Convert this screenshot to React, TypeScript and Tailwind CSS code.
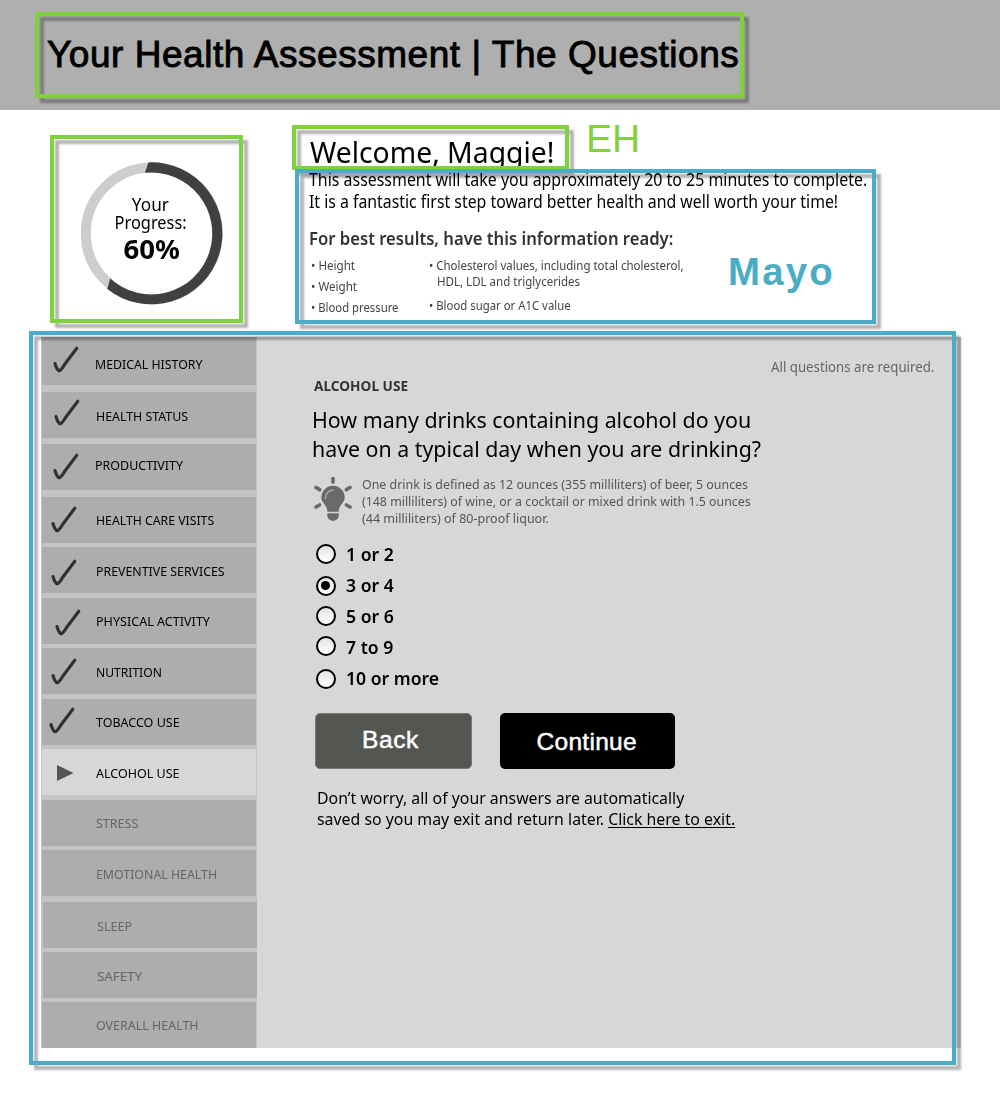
import type { ReactNode } from "react";

function Frame({ className }: { className: string }) {
  return (
    <div
      className={`pointer-events-none absolute border-4 drop-shadow-[5px_5px_1px_rgba(0,0,0,0.3)] ${className}`}
    />
  );
}

function T({ children, className = "", s = "" }: { children: ReactNode; className?: string; s?: string }) {
  return (
    <div className={className}>
      <span className={`inline-block whitespace-nowrap ${s.includes("origin-") ? "" : "origin-left"} ${s}`}>{children}</span>
    </div>
  );
}

function Check({ className }: { className: string }) {
  return (
    <svg viewBox="0 0 27 28" className={`absolute h-7 w-[27px] ${className}`}>
      <path
        d="M2 17.5 C2.8 20.5 4 23.6 6 24.8 C8.3 24.3 9.8 21 12.3 17.5 L23.8 2.2"
        fill="none"
        stroke="#303030"
        strokeWidth="3.1"
        strokeLinecap="round"
        strokeLinejoin="round"
      />
    </svg>
  );
}

type Item = { label: string; scale: string; box: string; check?: string; active?: boolean; pending?: boolean };

const items: Item[] = [
  { label: "MEDICAL HISTORY", scale: "scale-x-[0.926]", box: "h-12 pl-[52.5px] pt-[16.5px]", check: "left-[11px] top-[9px]" },
  { label: "HEALTH STATUS", scale: "scale-x-[0.930]", box: "mt-[7px] h-[46px] pl-[54px] pt-[13.5px]", check: "left-[12px] top-[7px]" },
  { label: "PRODUCTIVITY", scale: "scale-x-[0.938]", box: "mt-[6px] h-[46px] pl-[53px] pt-[11px]", check: "left-[11px] top-[9px]" },
  { label: "HEALTH CARE VISITS", scale: "scale-x-[0.922]", box: "mt-[7px] h-[46px] pl-[54px] pt-[13px]", check: "left-[9px] top-[9px]" },
  { label: "PREVENTIVE SERVICES", scale: "scale-x-[0.929]", box: "mt-[4px] h-[46px] pl-[54px] pt-[13.5px]", check: "left-[9px] top-[12px]" },
  { label: "PHYSICAL ACTIVITY", scale: "scale-x-[0.946]", box: "mt-[5px] h-[46px] pl-[54px] pt-[13px]", check: "left-[13px] top-[11px]" },
  { label: "NUTRITION", scale: "scale-x-[0.910]", box: "mt-[4px] h-[46px] pl-[54px] pt-[13.5px]", check: "left-[9px] top-[10px]" },
  { label: "TOBACCO USE", scale: "scale-x-[0.940]", box: "mt-[5px] h-[46px] pl-[54px] pt-[13px]", check: "left-[7px] top-[8px]" },
  { label: "ALCOHOL USE", scale: "scale-x-[0.941]", box: "mt-[4px] h-[46px] pl-[54px] pt-[13.5px]", active: true },
  { label: "STRESS", scale: "scale-x-[0.940]", box: "mt-[5px] h-[46px] pl-[54px] pt-[13px]", pending: true },
  { label: "EMOTIONAL HEALTH", scale: "scale-x-[0.928]", box: "mt-[4px] h-[46px] pl-[54px] pt-[13.5px]", pending: true },
  { label: "SLEEP", scale: "scale-x-[0.950]", box: "mt-[6px] h-[46px] translate-x-px pl-[54px] pt-[13.5px]", pending: true },
  { label: "SAFETY", scale: "", box: "mt-[4px] h-[46px] translate-x-px pl-[54px] pt-[13.5px]", pending: true },
  { label: "OVERALL HEALTH", scale: "scale-x-[0.937]", box: "mt-[4px] h-[46px] pl-[54px] pt-[13px]", pending: true },
];

const options = [
  { label: "1 or 2", dot: "mt-[2px]" },
  { label: "3 or 4", dot: "mt-[2.5px]", checked: true },
  { label: "5 or 6", dot: "mt-[2px]" },
  { label: "7 to 9", dot: "mt-[1px]" },
  { label: "10 or more", dot: "mt-[3px]" },
];

function Bulb() {
  return (
    <svg viewBox="0 0 40 47" className="h-[47px] w-10 shrink-0">
      <path
        d="M20 3.500V7M3 12.500l3.600 2.200M37 12.500l-3.600 2.200M3 32l3.600-2M37 32l-3.600-2"
        stroke="#6a6a6a"
        strokeWidth="3.7"
        strokeLinecap="round"
      />
      <path
        d="M20 10.700a11.700 11.700 0 0 1 11.700 11.700c0 5.200-5.500 7-6.200 14.300h-11c-.7-7.300-6.200-9.100-6.200-14.300a11.700 11.700 0 0 1 11.700-11.700z"
        fill="#6a6a6a"
      />
      <path d="M12.600 23.500a7.600 7.600 0 0 1 7.600-8.400" fill="none" stroke="#b5b5b5" strokeWidth="1.300" strokeLinecap="round" />
      <path d="M14.300 38.200h11.400v2.800c0 2-2.500 4.800-5.700 4.800s-5.700-2.800-5.700-4.800z" fill="#6a6a6a" />
    </svg>
  );
}

export default function App() {
  return (
    <div className="h-[1113px] w-[1000px] overflow-hidden bg-white font-['Noto_Sans',sans-serif] text-black">
      <header className="relative h-[110px] bg-[#afafaf] pl-[47px] font-['Liberation_Sans',sans-serif] text-[37px] leading-[110px]">
        <T className="tracking-[0.54px] [-webkit-text-stroke:0.9px_black]">Your Health Assessment | The Questions</T>
        <Frame className="left-[35px] top-3 h-[86px] w-[709px] border-[#7fd23b]" />
      </header>

      <section className="flex h-[227px] pl-[50px] pt-[25px]">
        <div className="relative grid h-[188px] w-[193px] shrink-0">
          <svg viewBox="50 135 193 188" className="h-[188px] w-[193px] [grid-area:1/1]">
            <circle cx="151.8" cy="233.4" r="66" fill="none" stroke="#cdcdcd" strokeWidth="10" />
            <path d="M148.3 162.4 A71 71 0 1 1 107.3 289 L110.2 278.6 A61 61 0 1 0 145 172.8 Z" fill="#404040" />
          </svg>
          <div className="flex flex-col items-center pl-2 pt-[60px] text-[18px] leading-[18px] [grid-area:1/1]">
            <T s="origin-center scale-x-[0.955]">Your</T>
            <T s="origin-center scale-x-[0.909]">Progress:</T>
            <T className="mt-[5px] pl-[3px] text-[26px] font-bold leading-[26px]" s="origin-center scale-x-[1.06]">60%</T>
          </div>
          <Frame className="inset-0 border-[#7fd23b]" />
        </div>

        <div className="-mt-[10px] ml-[49px]">
          <div className="flex">
            <div className="relative h-[45px] w-[277px] pl-[18px] text-[29.4px] leading-[55px]">
              <T s="scale-x-[0.963]">Welcome, Maggie!</T>
              <Frame className="inset-0 border-[#7fd23b]" />
            </div>
            <T className="-mt-[11px] ml-[17px] h-[45px] font-['Liberation_Sans',sans-serif] text-[39px] leading-[50px] text-[#7fd23b]">EH</T>
          </div>
          <div className="relative -mt-px ml-[3px] h-[155px] w-[581px] pl-[14px]">
            <div className="relative -top-[0.1px] text-[17.5px] leading-[21.7px]">
              <T s="scale-x-[0.910]">This assessment will take you approximately 20 to 25 minutes to complete.</T>
              <T s="scale-x-[0.905]">It is a fantastic first step toward better health and well worth your time!</T>
            </div>
            <T className="mt-[14.5px] text-[17px] font-semibold leading-6 text-[#333]" s="scale-x-[0.979]">For best results, have this information ready:</T>
            <div className="mt-1 flex pl-[2px] text-[12.3px] text-[#444]">
              <div className="w-[118px] leading-[21px]">
                <T s="scale-x-[0.943]">• Height</T>
                <T s="scale-x-[0.944]">• Weight</T>
                <T s="scale-x-[0.920]">• Blood pressure</T>
              </div>
              <div className="w-[299px] pt-[3px] leading-[15.7px]">
                <T s="scale-x-[0.932]">• Cholesterol values, including total cholesterol,</T>
                <T className="pl-[7.5px]" s="scale-x-[0.938]">HDL, LDL and triglycerides</T>
                <T className="mt-[8.5px]" s="scale-x-[0.924]">• Blood sugar or A1C value</T>
              </div>
              <T className="-mt-[5px] h-10 font-['Liberation_Sans',sans-serif] text-[38.4px] font-bold leading-[44px] tracking-[2.2px] text-[#4bacc6]">Mayo</T>
            </div>
            <Frame className="inset-0 border-[#4bacc6]" />
          </div>
        </div>
      </section>

      <main className="relative ml-[41px] flex h-[711px] w-[920px] bg-[#d7d7d7]">
        <nav className="w-[216px] shrink-0 bg-[#c4c4c4] px-px text-[13.3px] leading-5">
          {items.map((item) => (
            <div
              key={item.label}
              className={`relative ${item.box} ${item.active ? "bg-[#d7d7d7]" : "bg-[#adadad]"} ${item.pending ? "text-[#666]" : "text-black"}`}
            >
              {item.check && <Check className={item.check} />}
              {item.active && (
                <svg viewBox="0 0 17 16" className="absolute left-[15px] top-[15.5px] h-4 w-[17px]">
                  <path d="M0 0 L16.5 8 L0 16 Z" fill="#555" />
                </svg>
              )}
              <T s={item.scale}>{item.label}</T>
            </div>
          ))}
        </nav>

        <div className="min-w-0 flex-1 pl-[55px] pt-5">
          <T className="pl-[458.5px] text-[14px] leading-5 text-[#666]" s="scale-x-[0.946]">All questions are required.</T>
          <T className="pl-[1.5px] text-[13.6px] font-bold leading-[18px] text-[#333]" s="scale-x-[1.005]">ALCOHOL USE</T>
          <div className="mt-[9.5px] text-[22.4px] leading-[29px]">
            <T s="scale-x-[0.955]">How many drinks containing alcohol do you</T>
            <T s="scale-x-[0.953]">have on a typical day when you are drinking?</T>
          </div>
          <div className="mt-[12.5px] flex h-[51px] pl-[1px]">
            <Bulb />
            <div className="pl-[8.500px] pt-[1px] text-[13.3px] leading-[16.9px] text-[#555]">
              <T s="scale-x-[0.932]">One drink is defined as 12 ounces (355 milliliters) of beer, 5 ounces</T>
              <T s="scale-x-[0.930]">(148 milliliters) of wine, or a cocktail or mixed drink with 1.5 ounces</T>
              <T s="scale-x-[0.940]">(44 milliliters) of 80-proof liquor.</T>
            </div>
          </div>
          <div className="mt-4 pl-[3.5px] text-[17.7px] font-semibold leading-6">
            {options.map((o) => (
              <div key={o.label} className="flex h-[31px]">
                <span
                  className={`mr-[10.5px] flex size-5 shrink-0 items-center justify-center rounded-full border-2 border-black bg-linear-to-b from-[#e2e2e2] to-white ${o.dot}`}
                >
                  {o.checked && <span className="size-[9px] rounded-full bg-black" />}
                </span>
                <T s="scale-x-[0.995]">{o.label}</T>
              </div>
            ))}
          </div>
          <div className="mt-4 flex h-14 gap-7 pl-[3px] font-['Liberation_Sans',sans-serif] text-[24.5px] text-white">
            <div className="w-[157px] rounded-[5px] border border-[#777] bg-[#545652] pl-[46px] leading-[51px] tracking-[0.6px] [-webkit-text-stroke:0.5px_white]">
              Back
            </div>
            <div className="w-[175px] rounded-[5px] bg-black pl-[36.5px] leading-[57px] tracking-[0.3px] [-webkit-text-stroke:0.5px_white]">
              Continue
            </div>
          </div>
          <div className="mt-[18px] pl-[5px] text-[16.4px] leading-[21px]">
            <T s="scale-x-[0.967]">Don’t worry, all of your answers are automatically</T>
            <T s="scale-x-[0.968]">
              saved so you may exit and return later.{" "}
              <span className="underline decoration-1 underline-offset-2">Click here to exit.</span>
            </T>
          </div>
        </div>
        <Frame className="-left-3 -top-[6px] h-[734px] w-[927px] border-[#4bacc6]" />
      </main>
    </div>
  );
}
